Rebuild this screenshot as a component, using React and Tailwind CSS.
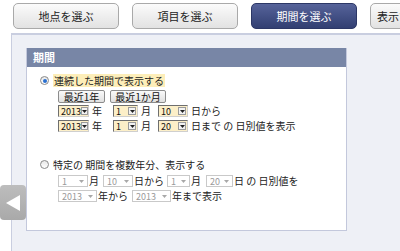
import React from "react";

const jp = { fontFamily: '"Noto Sans CJK JP", "Noto Sans", sans-serif' };

const Tab = ({ label, active, left }) => (
  <div
    className={`shrink-0 w-[106px] h-[26px] rounded-[5px] flex items-center text-[11px] ${
      left ? "justify-start pl-[6px]" : "justify-center"
    } ${
      active
        ? "bg-gradient-to-b from-[#56639a] to-[#323f72] border border-[#2c3766] text-white"
        : "bg-gradient-to-b from-[#fbfbfb] to-[#e2e2e2] border border-[#a9a9a9] text-[#222]"
    }`}
  >
    {label}
  </div>
);

const Radio = ({ on }) => (
  <span className="w-[9px] h-[9px] rounded-full border border-[#8a8a8a] bg-gradient-to-b from-[#e8e8e8] to-white flex items-center justify-center shrink-0">
    {on && <span className="w-[4px] h-[4px] rounded-full bg-[#2a6fd0]" />}
  </span>
);

// active dropdown (beige)
const Sel = ({ v, w }) => (
  <span className={`${w} h-[12px] flex items-center justify-between bg-[#fcefc8] border border-[#6e6e6e] border-r-[#cfcfcf] border-b-[#cfcfcf] pl-[2px] pr-[1px] text-[9px] leading-none text-[#111]`}>
    <span>{v}</span>
    <span className="w-[8px] h-[8px] bg-[#f2f2f2] border border-[#9a9a9a] flex items-center justify-center">
      <svg width="5" height="3" viewBox="0 0 5 3"><path d="M0 0h5L2.5 3z" fill="#222" /></svg>
    </span>
  </span>
);

// disabled dropdown
const DSel = ({ v, w }) => (
  <span className={`${w} h-[12px] flex items-center justify-between bg-white border border-[#c9c9c9] pl-[3px] pr-[3px] text-[9px] leading-none text-[#9a9a9a]`}>
    <span>{v}</span>
    <svg width="5" height="3" viewBox="0 0 5 3"><path d="M0 0h5L2.5 3z" fill="#a8a8a8" /></svg>
  </span>
);

const Btn = ({ label, w }) => (
  <span className={`${w} h-[13px] flex items-center justify-center bg-gradient-to-b from-[#fafafa] to-[#e0e0e0] border border-[#8c8c8c] rounded-[2px] text-[10px] leading-none text-[#111]`}>
    {label}
  </span>
);

export default function App() {
  return (
    <div className="relative w-[400px] h-[251px] overflow-hidden bg-white" style={jp}>
      <div className="flex gap-[13px] pl-[13px] pt-[3px]">
        <Tab label="地点を選ぶ" />
        <Tab label="項目を選ぶ" />
        <Tab label="期間を選ぶ" active />
        <Tab label="表示する" left />
      </div>

      <div className="ml-[11px] mt-[4px] h-[220px] bg-[#eef0f6] border-t-2 border-l border-[#c9cee0] pt-[13px] pl-[14px]">
        <div className="w-[321px] h-[183px] bg-white border border-[#c3c8dc] border-t-0">
          <div className="h-[19px] bg-[#7886a6] text-white text-[11px] font-bold pl-[6px] flex items-center">期間</div>

          <div className="pl-[13px] pt-[7px] text-[10px] text-[#222] leading-none">
            <div className="flex items-center gap-[4px] h-[13px]">
              <Radio on />
              <span className="bg-[#fdeeb9] h-[13px] px-[1px] flex items-center text-[#222]">連続した期間で表示する</span>
            </div>

            <div className="pl-[18px] mt-[3px] flex flex-col gap-[2px]">
              <div className="flex gap-[5px]">
                <Btn label="最近1年" w="w-[47px]" />
                <Btn label="最近1か月" w="w-[56px]" />
              </div>
              <div className="flex items-center h-[12px]">
                <Sel v="2013" w="w-[31px]" />
                <span className="ml-[3px] mr-[11px]">年</span>
                <Sel v="1" w="w-[25px]" />
                <span className="ml-[3px] mr-[7px]">月</span>
                <Sel v="10" w="w-[30px]" />
                <span className="ml-[3px]">日から</span>
              </div>
              <div className="flex items-center h-[12px] mt-[1px]">
                <Sel v="2013" w="w-[31px]" />
                <span className="ml-[3px] mr-[11px]">年</span>
                <Sel v="1" w="w-[25px]" />
                <span className="ml-[3px] mr-[7px]">月</span>
                <Sel v="20" w="w-[30px]" />
                <span className="ml-[3px]">日まで の 日別値を表示</span>
              </div>
            </div>

            <div className="flex items-center gap-[4px] h-[13px] mt-[26px]">
              <Radio />
              <span>特定の 期間を複数年分、表示する</span>
            </div>

            <div className="pl-[18px] mt-[4px] flex flex-col gap-[3px]">
              <div className="flex items-center h-[12px]">
                <DSel v="1" w="w-[30px]" />
                <span className="ml-[1px] mr-[4px]">月</span>
                <DSel v="10" w="w-[30px]" />
                <span className="ml-[1px] mr-[3px]">日から</span>
                <DSel v="1" w="w-[23px]" />
                <span className="ml-[1px] mr-[5px]">月</span>
                <DSel v="20" w="w-[27px]" />
                <span className="ml-[1px]">日 の 日別値を</span>
              </div>
              <div className="flex items-center h-[12px]">
                <DSel v="2013" w="w-[39px]" />
                <span className="ml-[1px] mr-[4px]">年から</span>
                <DSel v="2013" w="w-[39px]" />
                <span className="ml-[1px]">年まで表示</span>
              </div>
            </div>
          </div>
        </div>
      </div>

      <div className="absolute left-0 top-[185px] w-[26px] h-[35px] rounded-[4px] bg-gradient-to-b from-[#bdbdbd] to-[#a9a9a9] flex items-center justify-center">
        <svg width="14" height="16" viewBox="0 0 14 16"><path d="M0 8L14 0v16z" fill="#fff" /></svg>
      </div>
    </div>
  );
}
